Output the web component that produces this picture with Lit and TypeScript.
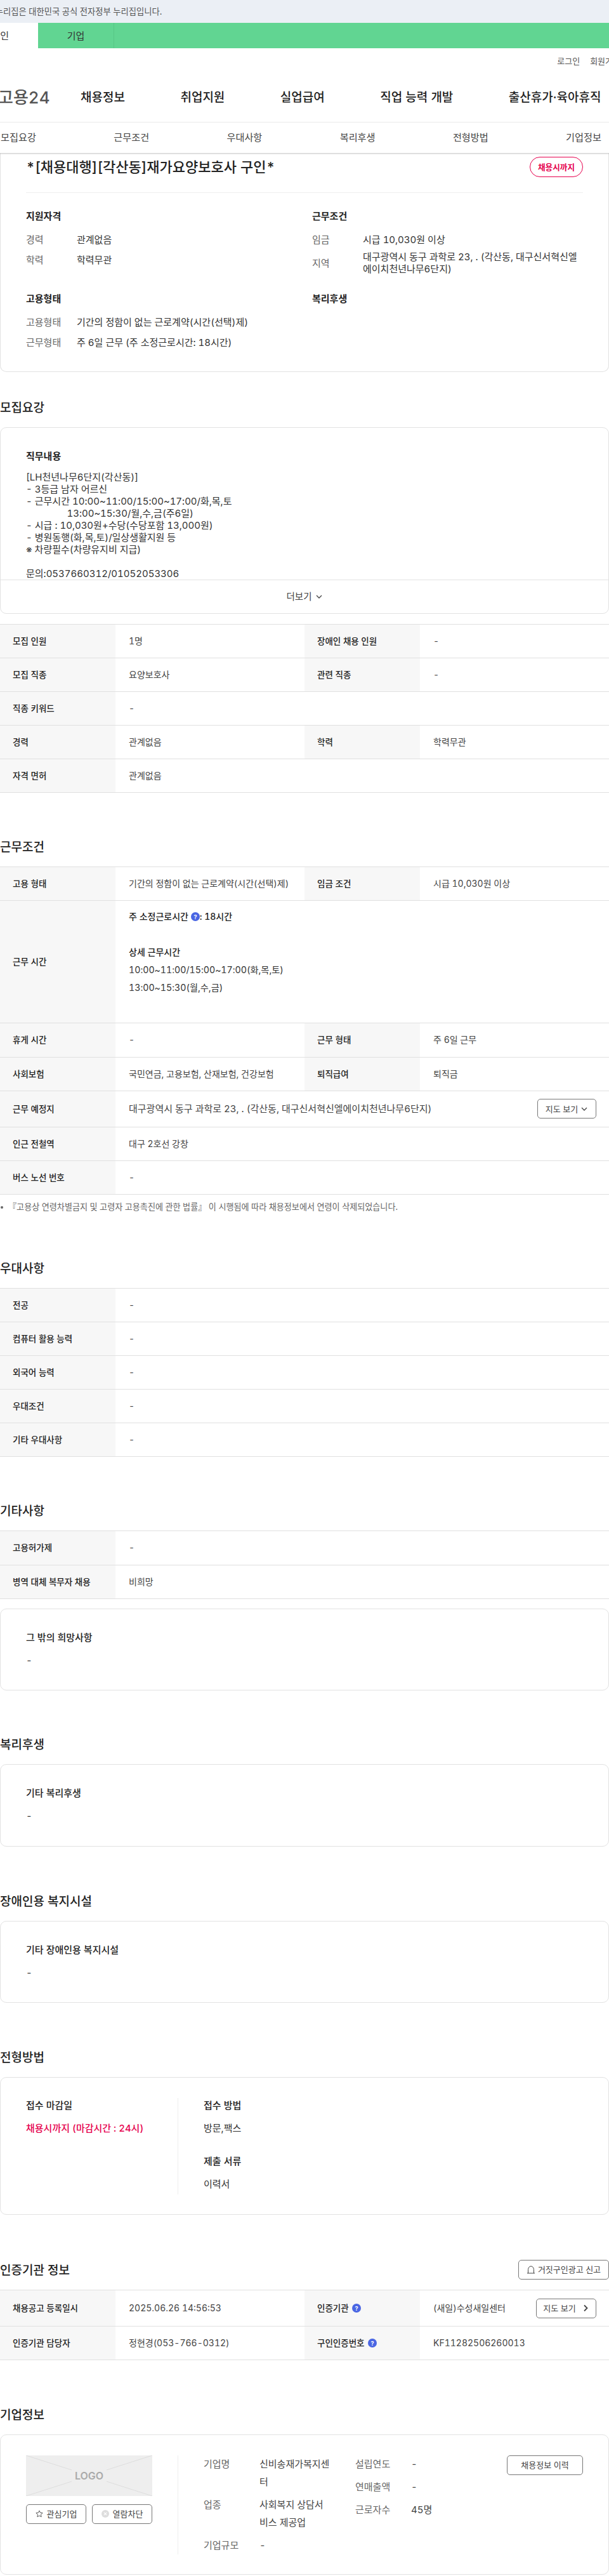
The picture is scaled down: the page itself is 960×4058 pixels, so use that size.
import { LitElement, css, html, nothing } from "lit";
import { customElement } from "lit/decorators.js";

type Cell = { th: unknown; td: unknown; extra?: unknown };

const help = html`<svg class="help" viewBox="0 0 14 14" aria-hidden="true">
  <circle cx="7" cy="7" r="7" fill="#4a66e3"></circle>
  <text x="7" y="10.5" text-anchor="middle" font-size="9" font-weight="700" fill="#fff">?</text>
</svg>`;

const chevDown = html`<svg class="chev" viewBox="0 0 12 12" aria-hidden="true">
  <path d="M2 4l4 4 4-4" fill="none" stroke="currentColor" stroke-width="1.3"></path>
</svg>`;

const chevRight = html`<svg class="chev" viewBox="0 0 12 12" aria-hidden="true">
  <path d="M4 1.5 8.5 6 4 10.5" fill="none" stroke="currentColor" stroke-width="1.8"></path>
</svg>`;

const jobText = `[LH천년나무6단지(각산동)]
- 3등급 남자 어르신
- 근무시간 10:00~11:00/15:00~17:00/화,목,토
                13:00~15:30/월,수,금(주6일)
- 시급 : 10,030원+수당(수당포함 13,000원)
- 병원동행(화,목,토)/일상생활지원 등
※ 차량필수(차량유지비 지급)

문의:0537660312/01052053306`;

@customElement("app-root")
export class AppRoot extends LitElement {
  static styles = css`
    * {
      box-sizing: border-box;
      margin: 0;
    }

    :host {
      display: block;
      width: 960px;
      height: 4058px;
      overflow: hidden;
      background: #fff;
      color: #333;
      font-family: Inter, "Noto Sans CJK KR", "Noto Sans", sans-serif;
      font-size: 15px;
      line-height: 21px;
      font-variant-numeric: tabular-nums;
    }

    .gov {
      height: 36px;
      background: #ebeff5;
      color: #555;
      font-size: 13.3px;
      line-height: 36px;
      overflow: hidden;
      white-space: nowrap;
    }

    .gov span {
      display: block;
      margin-left: -23px;
    }

    .who {
      height: 40px;
      background: #61d592;
      display: flex;
      font-size: 15px;
      color: #333;
    }

    .who div {
      display: flex;
      align-items: center;
      justify-content: center;
      white-space: nowrap;
    }

    .who .on {
      width: 60px;
      background: #fff;
      justify-content: flex-end;
      padding-right: 46px;
    }

    .who .off {
      width: 120px;
      border-right: 1px solid #57c786;
    }

    .util {
      height: 40px;
      display: flex;
      justify-content: flex-end;
      gap: 16px;
      padding-top: 10px;
      margin-right: -18px;
      font-size: 13px;
      color: #555;
    }

    .main {
      height: 76.5px;
      display: flex;
      align-items: center;
      border-bottom: 1px solid #eee;
      color: #222;
      white-space: nowrap;
    }

    .logo {
      width: 130px;
      margin-left: -3px;
      flex: none;
      font-size: 26px;
      font-weight: 500;
      color: #555;
    }

    .main nav {
      display: flex;
      gap: 87.5px;
      font-size: 19px;
      font-weight: 500;
    }

    .tabs {
      height: 48.5px;
      display: flex;
      justify-content: space-between;
      align-items: center;
      padding: 0 12px 0 1px;
      font-size: 15.2px;
      color: #444;
      box-shadow: 0 1px 2px rgba(0, 0, 0, 0.25);
      position: relative;
      z-index: 1;
      background: #fff;
    }

    .card {
      border: 1px solid #e2e2e2;
      border-radius: 10px;
    }

    .summary {
      border-top: 0;
      border-radius: 0 0 10px 10px;
      padding: 6px 40px 35px;
    }

    .title-row {
      display: flex;
      justify-content: space-between;
      align-items: center;
      height: 32px;
      margin-bottom: 24px;
    }

    h1 {
      font-size: 22px;
      font-weight: 500;
      color: #222;
    }

    .badge {
      width: 84px;
      height: 32px;
      border: 1px solid #e6004d;
      border-radius: 16px;
      color: #e6004d;
      font-size: 12.6px;
      font-weight: 700;
      display: flex;
      align-items: center;
      justify-content: center;
    }

    .info {
      border-top: 1px solid #eee;
      padding-top: 27px;
      display: grid;
      grid-template-columns: 451px 1fr;
      row-gap: 27.5px;
    }

    h3 {
      font-size: 15px;
      font-weight: 700;
      line-height: 20px;
      color: #222;
    }

    .info h3 {
      margin-bottom: 16px;
    }

    .dl {
      display: grid;
      grid-template-columns: 80px 1fr;
      row-gap: 10.5px;
      align-items: center;
    }

    .dl.tight {
      row-gap: 6.5px;
    }

    .dl dt {
      color: #666;
    }

    .addr {
      line-height: 19.5px;
    }

    .sec {
      margin-top: 71px;
    }

    .sec.wide {
      margin-top: 72px;
    }

    .first {
      margin-top: 42px;
    }

    h2 {
      font-size: 19px;
      font-weight: 500;
      line-height: 27px;
      padding-top: 1px;
      margin-bottom: 17px;
      color: #222;
    }

    .head {
      display: flex;
      justify-content: space-between;
      align-items: center;
      height: 31px;
      margin-bottom: 16px;
    }

    .head h2 {
      margin: 0;
    }

    .job {
      padding-top: 35px;
    }

    .job h3 {
      padding: 0 40px;
      margin-bottom: 13px;
    }

    pre {
      padding: 0 40px;
      height: 172px;
      overflow: hidden;
      font: inherit;
      line-height: 19px;
      border-bottom: 1px solid #e2e2e2;
    }

    .more {
      height: 52px;
      display: flex;
      align-items: center;
      justify-content: center;
      gap: 5px;
      font-size: 14.5px;
      color: #444;
    }

    .box {
      padding: 35px 40px 0;
      height: 129.5px;
    }

    .box h3 {
      font-weight: 500;
      margin-bottom: 15px;
    }

    .table {
      border-top: 1px solid #e0e0e0;
      font-size: 14px;
      line-height: 20.16px;
    }

    .after-job {
      margin-top: 16px;
    }

    .after-table {
      margin-top: 15px;
    }

    .row {
      display: grid;
      grid-template-columns: 182px 298px 182px 1fr;
      border-bottom: 1px solid #e0e0e0;
    }

    .row.single {
      grid-template-columns: 182px 1fr;
    }

    .th,
    .td {
      padding: 16px 20px;
      display: flex;
      align-items: center;
      gap: 5px;
      min-width: 0;
    }

    .th {
      background: #f7f7f7;
      font-size: 13.5px;
      font-weight: 500;
      color: #222;
    }

    .td {
      padding-left: 21px;
      color: #444;
    }

    .td.space {
      justify-content: space-between;
      padding: 12.5px 20px 12.5px 21px;
    }

    .td .big {
      font-size: 15px;
    }

    .hours {
      padding: 11px 21px 13px;
      line-height: 28px;
      color: #333;
    }

    .hours strong {
      font-weight: 500;
      color: #222;
    }

    .hours span {
      font-size: 14.2px;
    }

    .help {
      width: 14px;
      height: 14px;
      vertical-align: -2px;
      flex: none;
    }

    .note {
      padding: 9.5px 0 3px;
      font-size: 13.1px;
      line-height: 18px;
      color: #666;
      display: flex;
      gap: 8px;
    }

    .note::before {
      content: "";
      width: 4px;
      height: 4px;
      border-radius: 50%;
      background: #666;
      margin-top: 8px;
      margin-left: 1px;
    }

    .btn {
      height: 31px;
      border: 1px solid #777;
      border-radius: 5px;
      background: #fff;
      font: inherit;
      font-size: 13px;
      color: #444;
      display: inline-flex;
      align-items: center;
      justify-content: center;
      gap: 4px;
      white-space: nowrap;
      flex: none;
    }

    .btn.map {
      width: 93px;
    }

    .btn.map-go {
      width: 95px;
      gap: 9px;
    }

    .btn.report {
      width: 143px;
    }

    .chev {
      width: 12px;
      height: 12px;
      flex: none;
    }

    .bell {
      width: 14px;
      height: 13px;
      flex: none;
    }

    .apply {
      height: 217px;
      padding: 32px 40px 0;
      display: grid;
      grid-template-columns: 239px 1fr;
    }

    .apply .col {
      padding-top: 2px;
    }

    .apply .col + .col {
      border-left: 1px solid #eee;
      padding-left: 40px;
      height: 151.5px;
    }

    .apply h3 {
      margin-bottom: 15px;
      font-weight: 500;
    }

    .apply p + h3 {
      margin-top: 31.5px;
    }

    .red {
      color: #e6004d;
      font-weight: 500;
    }

    .corp {
      height: 221px;
      padding: 32px 40px 0;
      display: grid;
      grid-template-columns: 239px 1fr;
    }

    .placeholder {
      display: block;
      width: 199px;
      height: 64px;
      margin-bottom: 12.5px;
    }

    .corp-actions {
      display: flex;
      justify-content: space-between;
      width: 199px;
    }

    .corp-actions .btn {
      width: 95px;
      gap: 6px;
    }

    .corp-data {
      border-left: 1px solid #eee;
      padding-left: 40px;
      height: 156px;
      display: grid;
      grid-template-columns: 239px 239px 120px;
      align-items: start;
    }

    .corp-list {
      display: grid;
      grid-template-columns: 88px 112px;
      row-gap: 8px;
      line-height: 28px;
      color: #444;
    }

    .corp-list dt {
      color: #666;
    }

    .corp-data .btn {
      width: 120px;
    }
  `;

  private rows(rows: Cell[][]) {
    return rows.map(
      (cells) => html`<div class="row ${cells.length === 1 ? "single" : ""}">
        ${cells.map(
          (c) => html`<div class="th">${c.th}</div>
            <div class="td ${c.extra ? "space" : ""}">
              <span>${c.td}</span>${c.extra ?? nothing}
            </div>`
        )}
      </div>`
    );
  }

  private box(title: string, h2: string, cls: string) {
    return html`<section class="sec ${cls}">
      <h2>${h2}</h2>
      <div class="card box">
        <h3>${title}</h3>
        <div>-</div>
      </div>
    </section>`;
  }

  render() {
    return html`
      <div class="gov"><span>이 누리집은 대한민국 공식 전자정부 누리집입니다.</span></div>
      <div class="who">
        <div class="on">개인</div>
        <div class="off">기업</div>
      </div>
      <header>
        <div class="util"><span>로그인</span><span>회원가입</span></div>
        <div class="main">
          <div class="logo">고용24</div>
          <nav>
            <span>채용정보</span><span>취업지원</span><span>실업급여</span><span>직업 능력 개발</span
            ><span>출산휴가·육아휴직</span>
          </nav>
        </div>
        <div class="tabs">
          <span>모집요강</span><span>근무조건</span><span>우대사항</span><span>복리후생</span
          ><span>전형방법</span><span>기업정보</span>
        </div>
      </header>

      <div class="card summary">
        <div class="title-row">
          <h1>*[채용대행][각산동]재가요양보호사 구인*</h1>
          <div class="badge">채용시까지</div>
        </div>
        <div class="info">
          <div>
            <h3>지원자격</h3>
            <dl class="dl">
              <dt>경력</dt><dd>관계없음</dd>
              <dt>학력</dt><dd>학력무관</dd>
            </dl>
          </div>
          <div>
            <h3>근무조건</h3>
            <dl class="dl tight">
              <dt>임금</dt><dd>시급 10,030원 이상</dd>
              <dt>지역</dt><dd class="addr">대구광역시 동구 과학로 23, . (각산동, 대구신서혁신엘에이치천년나무6단지)</dd>
            </dl>
          </div>
          <div>
            <h3>고용형태</h3>
            <dl class="dl">
              <dt>고용형태</dt><dd>기간의 정함이 없는 근로계약(시간(선택)제)</dd>
              <dt>근무형태</dt><dd>주 6일 근무 (주 소정근로시간: 18시간)</dd>
            </dl>
          </div>
          <div><h3>복리후생</h3></div>
        </div>
      </div>

      <section class="first">
        <h2>모집요강</h2>
        <div class="card job">
          <h3>직무내용</h3>
          <pre>${jobText}</pre>
          <div class="more">더보기 ${chevDown}</div>
        </div>
        <div class="table after-job">
          ${this.rows([
            [{ th: "모집 인원", td: "1명" }, { th: "장애인 채용 인원", td: "-" }],
            [{ th: "모집 직종", td: "요양보호사" }, { th: "관련 직종", td: "-" }],
            [{ th: "직종 키워드", td: "-" }],
            [{ th: "경력", td: "관계없음" }, { th: "학력", td: "학력무관" }],
            [{ th: "자격 면허", td: "관계없음" }],
          ])}
        </div>
      </section>

      <section class="sec">
        <h2>근무조건</h2>
        <div class="table">
          ${this.rows([[{ th: "고용 형태", td: "기간의 정함이 없는 근로계약(시간(선택)제)" }, { th: "임금 조건", td: "시급 10,030원 이상" }]])}
          <div class="row single">
            <div class="th">근무 시간</div>
            <div class="hours">
              <strong>주 소정근로시간 ${help}: 18시간</strong><br /><br />
              <strong>상세 근무시간</strong><br />
              <span>10:00~11:00/15:00~17:00(화,목,토)</span><br />
              <span>13:00~15:30(월,수,금)</span><br /><br />
            </div>
          </div>
          ${this.rows([
            [{ th: "휴게 시간", td: "-" }, { th: "근무 형태", td: "주 6일 근무" }],
            [{ th: "사회보험", td: "국민연금, 고용보험, 산재보험, 건강보험" }, { th: "퇴직급여", td: "퇴직금" }],
            [
              {
                th: "근무 예정지",
                td: html`<span class="big">대구광역시 동구 과학로 23, . (각산동, 대구신서혁신엘에이치천년나무6단지)</span>`,
                extra: html`<button class="btn map">지도 보기 ${chevDown}</button>`,
              },
            ],
            [{ th: "인근 전철역", td: "대구 2호선 강창" }],
            [{ th: "버스 노선 번호", td: "-" }],
          ])}
        </div>
        <p class="note">『고용상 연령차별금지 및 고령자 고용촉진에 관한 법률』 이 시행됨에 따라 채용정보에서 연령이 삭제되었습니다.</p>
      </section>

      <section class="sec">
        <h2>우대사항</h2>
        <div class="table">
          ${this.rows([
            [{ th: "전공", td: "-" }],
            [{ th: "컴퓨터 활용 능력", td: "-" }],
            [{ th: "외국어 능력", td: "-" }],
            [{ th: "우대조건", td: "-" }],
            [{ th: "기타 우대사항", td: "-" }],
          ])}
        </div>
      </section>

      <section class="sec">
        <h2>기타사항</h2>
        <div class="table">
          ${this.rows([[{ th: "고용허가제", td: "-" }], [{ th: "병역 대체 복무자 채용", td: "비희망" }]])}
        </div>
        <div class="card box after-table">
          <h3>그 밖의 희망사항</h3>
          <div>-</div>
        </div>
      </section>

      ${this.box("기타 복리후생", "복리후생", "")} ${this.box("기타 장애인용 복지시설", "장애인용 복지시설", "wide")}

      <section class="sec wide">
        <h2>전형방법</h2>
        <div class="card apply">
          <div class="col">
            <h3>접수 마감일</h3>
            <p class="red">채용시까지 (마감시간 : 24시)</p>
          </div>
          <div class="col">
            <h3>접수 방법</h3>
            <p>방문,팩스</p>
            <h3>제출 서류</h3>
            <p>이력서</p>
          </div>
        </div>
      </section>

      <section class="sec">
        <div class="head">
          <h2>인증기관 정보</h2>
          <button class="btn report">
            <svg class="bell" viewBox="0 0 14 13" aria-hidden="true">
              <path d="M2.5 12V6.5C2.5 3.5 4.5 1 7 1s4.5 2.5 4.5 5.5V12M1 12h12" fill="none" stroke="currentColor"></path>
            </svg>
            거짓구인광고 신고
          </button>
        </div>
        <div class="table">
          <div class="row">
            <div class="th">채용공고 등록일시</div>
            <div class="td">2025.06.26 14:56:53</div>
            <div class="th">인증기관 ${help}</div>
            <div class="td space">
              <span>(새일)수성새일센터</span>
              <button class="btn map-go">지도 보기 ${chevRight}</button>
            </div>
          </div>
          <div class="row">
            <div class="th">인증기관 담당자</div>
            <div class="td">정현경(053-766-0312)</div>
            <div class="th">구인인증번호 ${help}</div>
            <div class="td">KF11282506260013</div>
          </div>
        </div>
      </section>

      <section class="sec wide">
        <h2>기업정보</h2>
        <div class="card corp">
          <div>
            <svg class="placeholder" viewBox="0 0 199 64" role="img" aria-label="LOGO">
              <rect width="199" height="64" fill="#eee"></rect>
              <path d="M0 0 72 23M0 64 72 41M127 23 199 0M127 41 199 64" stroke="#ddd" fill="none"></path>
              <text x="99.5" y="38" text-anchor="middle" font-size="16" font-weight="600" fill="#aaa">LOGO</text>
            </svg>
            <div class="corp-actions">
              <button class="btn">
                <svg class="chev" viewBox="0 0 14 14" aria-hidden="true">
                  <path d="M7 1.2 8.8 5l4.2.5-3.1 2.9.8 4.2L7 10.5l-3.7 2.1.8-4.2L1 5.5 5.2 5Z" fill="none" stroke="#444"></path>
                </svg>
                관심기업
              </button>
              <button class="btn">
                <svg class="chev" viewBox="0 0 14 14" aria-hidden="true">
                  <circle cx="7" cy="7" r="7" fill="#ddd"></circle>
                  <path d="M4.5 4.5l5 5M9.5 4.5l-5 5" stroke="#fff" stroke-width="1.3"></path>
                </svg>
                열람차단
              </button>
            </div>
          </div>
          <div class="corp-data">
            <dl class="corp-list">
              <dt>기업명</dt><dd>신비송재가복지센터</dd>
              <dt>업종</dt><dd>사회복지 상담서비스 제공업</dd>
              <dt>기업규모</dt><dd>-</dd>
            </dl>
            <dl class="corp-list">
              <dt>설립연도</dt><dd>-</dd>
              <dt>연매출액</dt><dd>-</dd>
              <dt>근로자수</dt><dd>45명</dd>
            </dl>
            <button class="btn">채용정보 이력</button>
          </div>
        </div>
      </section>
    `;
  }
}
